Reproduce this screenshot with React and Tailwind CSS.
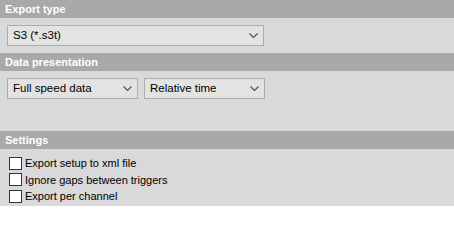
import React from "react";

const font = { fontFamily: "Tahoma, 'Liberation Sans', Arial, sans-serif" };

const Header = ({ title }) => (
  <div className="h-[18px] bg-[#a9a9a9] pl-[5px] flex items-center text-[11px] font-bold text-white">
    {title}
  </div>
);

const Chevron = () => (
  <svg width="9" height="5" viewBox="0 0 9 5" className="shrink-0">
    <path d="M0.5 0.5 L4.5 4.5 L8.5 0.5" fill="none" stroke="#555" strokeWidth="1.2" />
  </svg>
);

const Select = ({ value, width }) => (
  <div
    className={`h-[21px] ${width} bg-[#e3e3e3] border border-[#adadad] flex items-center justify-between pl-[5px] pr-[5px] text-[11.5px] text-black`}
  >
    <span>{value}</span>
    <Chevron />
  </div>
);

const Check = ({ label }) => (
  <div className="flex items-center h-[16.5px] gap-[3px]">
    <div className="w-[13px] h-[13px] bg-white border border-[#333]" />
    <span className="text-[11px] text-black">{label}</span>
  </div>
);

export default function App() {
  return (
    <div className="w-[454px] h-[206px] bg-[#d9d8da] overflow-hidden" style={font}>
      <Header title="Export type" />
      <div className="h-[35px] px-[7px] pt-[7px]">
        <Select value="S3 (*.s3t)" width="w-[257px]" />
      </div>
      <Header title="Data presentation" />
      <div className="h-[60px] flex gap-[6px] px-[7px] pt-[7px]">
        <Select value="Full speed data" width="w-[131px]" />
        <Select value="Relative time" width="w-[121px]" />
      </div>
      <Header title="Settings" />
      <div className="pl-[9px] pt-[6px] flex flex-col">
        <Check label="Export setup to xml file" />
        <Check label="Ignore gaps between triggers" />
        <Check label="Export per channel" />
      </div>
    </div>
  );
}
